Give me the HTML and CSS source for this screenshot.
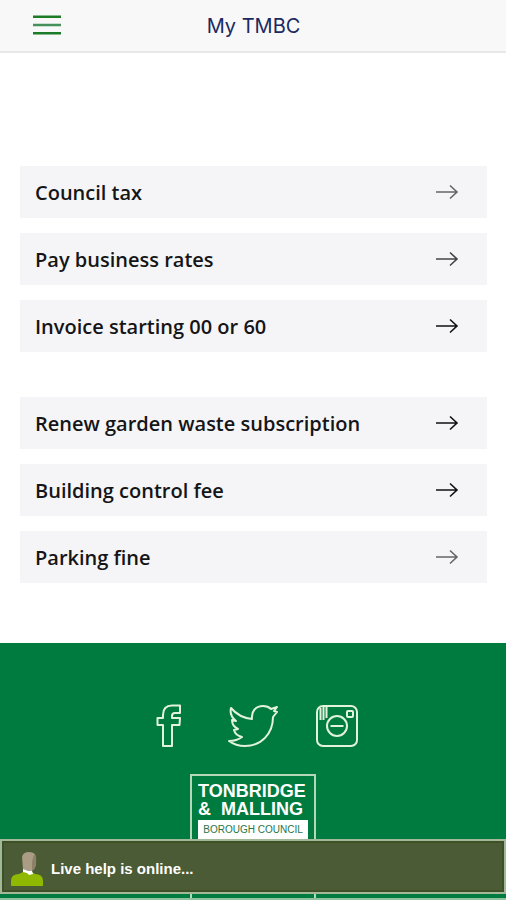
FILE: index.html
```html
<!DOCTYPE html>
<html lang="en">
<head>
<meta charset="utf-8">
<meta name="viewport" content="width=device-width, initial-scale=1">
<title>My TMBC</title>
<link rel="stylesheet" href="styles.css">
</head>
<body>
<svg class="sprite" aria-hidden="true">
  <symbol id="arrow" viewBox="0 0 24 16"><path d="M1 8H22M15 1.500L22 8L15 14.500" fill="none" stroke="currentColor" stroke-width="1.600"/></symbol>
</svg>
<header class="topbar">
  <button class="menu" type="button" aria-label="Menu">
    <svg width="28" height="21" viewBox="0 0 28 21" fill="none" stroke-width="2.500"><path d="M0 1.800H28M0 18.200H28" stroke="#1d7a26"/><path d="M0 10H28" stroke="#46915b"/></svg>
  </button>
  <h1 class="title">My TMBC</h1>
</header>
<main class="content">
  <nav class="group" aria-label="Bills">
    <a class="card" href="#council-tax">Council tax<svg class="arrow soft"><use href="#arrow"/></svg></a>
    <a class="card" href="#business-rates">Pay business rates<svg class="arrow mid"><use href="#arrow"/></svg></a>
    <a class="card" href="#invoice">Invoice starting 00 or 60<svg class="arrow"><use href="#arrow"/></svg></a>
  </nav>
  <nav class="group" aria-label="Services">
    <a class="card" href="#garden-waste">Renew garden waste subscription<svg class="arrow"><use href="#arrow"/></svg></a>
    <a class="card" href="#building-control">Building control fee<svg class="arrow"><use href="#arrow"/></svg></a>
    <a class="card" href="#parking">Parking fine<svg class="arrow soft"><use href="#arrow"/></svg></a>
  </nav>
</main>
<footer class="footer">
  <div class="social">
    <a href="#facebook" aria-label="Facebook">
      <svg width="26" height="44" viewBox="0 0 26 44"><path d="M7 42V21H1.500V14H7V11C7 5 10 1.500 16 1.500H24V9H19C17 9 16 10 16 12V14H24L23.500 21H16V42Z"/></svg>
    </a>
    <a href="#twitter" aria-label="Twitter">
      <svg width="52" height="44" viewBox="0 0 52 44"><path d="M4 4C9 10 16 14 25 15C24 7 29 2 36 2C39 2 42 3 44 5L50 3L47 7L50 8L46 13C46 30 34 42 18 42C12 42 6 40 2 37C7 37 11 36 15 33C11 32 8 30 7 26L11 25C7 23 5 20 5 16L9 17C4 13 3 8 4 4Z"/></svg>
    </a>
    <a href="#instagram" aria-label="Instagram">
      <svg width="44" height="44" viewBox="0 0 44 44"><rect x="2" y="2" width="40" height="40" rx="6"/><circle cx="22" cy="22" r="10"/><rect x="32" y="7" width="6" height="6" rx="1"/><path d="M5.500 4V16M8.500 3V16M11.500 3V14M15.500 22H28.500"/></svg>
    </a>
  </div>
  <div class="crest">
    <p class="crest-name">TONBRIDGE<br>&amp;&nbsp; MALLING</p>
    <p class="crest-sub">BOROUGH COUNCIL</p>
  </div>
</footer>
<button class="live" type="button">
  <svg width="32" height="34" viewBox="0 0 32 34"><path d="M0 34V29Q0 22 8 22L12 20H21L24 22Q32 22 32 29V34Z" fill="#8fb800"/><path d="M12 17H21V19L22 22L18 23L16 21L12 20Z" fill="#fff"/><path d="M11 5Q12 0 18 0Q25 0 25 6V12Q24 18 20 19H17L12 17Z" fill="#aa9c85"/><path d="M23 2Q26 4 25 12Q24 17 21 18V10Z" fill="#8d806a"/></svg>
  <span>Live help is online...</span>
</button>
</body>
</html>
```
FILE: styles.css
```css
* { box-sizing: border-box; }
body {
  margin: 0;
  min-height: 100vh;
  display: flex;
  flex-direction: column;
  background: #fff;
  font-family: "Open Sans", sans-serif;
}
.sprite { position: absolute; width: 0; height: 0; }
.topbar {
  display: grid;
  grid-template-columns: 1fr auto 1fr;
  align-items: center;
  height: 53px;
  padding-left: 33px;
  padding-right: 32px;
  background: #f8f8f8;
  border-bottom: 2px solid #e8e8e8;
}
.menu { justify-self: start; display: flex; padding: 0; border: 0; background: none; }
.title { margin: 0; font: 400 20px/28px Inter, sans-serif; color: #1b2a63; }
.content {
  display: flex;
  flex-direction: column;
  gap: 45px;
  padding: 113px 19px 60px 20px;
}
.group { display: flex; flex-direction: column; gap: 15px; }
.card {
  display: flex;
  align-items: center;
  justify-content: space-between;
  padding: 13px 28px 11px 15px;
  background: #f5f5f7;
  color: #151517;
  font-size: 20px;
  line-height: 28px;
  font-weight: 600;
  text-decoration: none;
}
.arrow { width: 24px; height: 16px; margin-bottom: 2px; color: #111; }
.arrow.mid { color: #444; }
.arrow.soft { color: #666; }
.footer {
  flex: 1;
  display: flex;
  flex-direction: column;
  align-items: center;
  padding-top: 61px;
  background: #007b40;
  border-bottom: 2px solid #8fc3a0;
}
.social { display: grid; grid-template-columns: repeat(3, 84px); justify-items: center; }
.social svg { display: block; fill: none; stroke: #e3f2dc; stroke-width: 2; stroke-linejoin: round; }
.crest {
  flex: 1;
  width: 126px;
  margin-top: 26px;
  padding: 6px 6px 0;
  border: 2px solid #b5d9b8;
  border-bottom: 0;
  font-family: "Liberation Sans", sans-serif;
}
.crest p { margin: 0; }
.crest-name { color: #fff; font-size: 18px; line-height: 18px; font-weight: 700; white-space: nowrap; }
.crest .crest-sub {
  margin-top: 2px;
  padding-bottom: 20px;
  background: #fff;
  color: #287548;
  font-size: 10px;
  line-height: 20px;
  text-align: center;
  white-space: nowrap;
}
.live {
  position: fixed;
  left: 0;
  right: 0;
  bottom: 6px;
  height: 55px;
  display: flex;
  align-items: center;
  gap: 8px;
  padding: 5px 9px 0;
  border: 2px solid #a3b899;
  background: #4b5b35;
  box-shadow: inset 0 0 0 2px #3f5026;
  color: #fff;
  font: 700 15px/20px "Liberation Sans", sans-serif;
}
```
